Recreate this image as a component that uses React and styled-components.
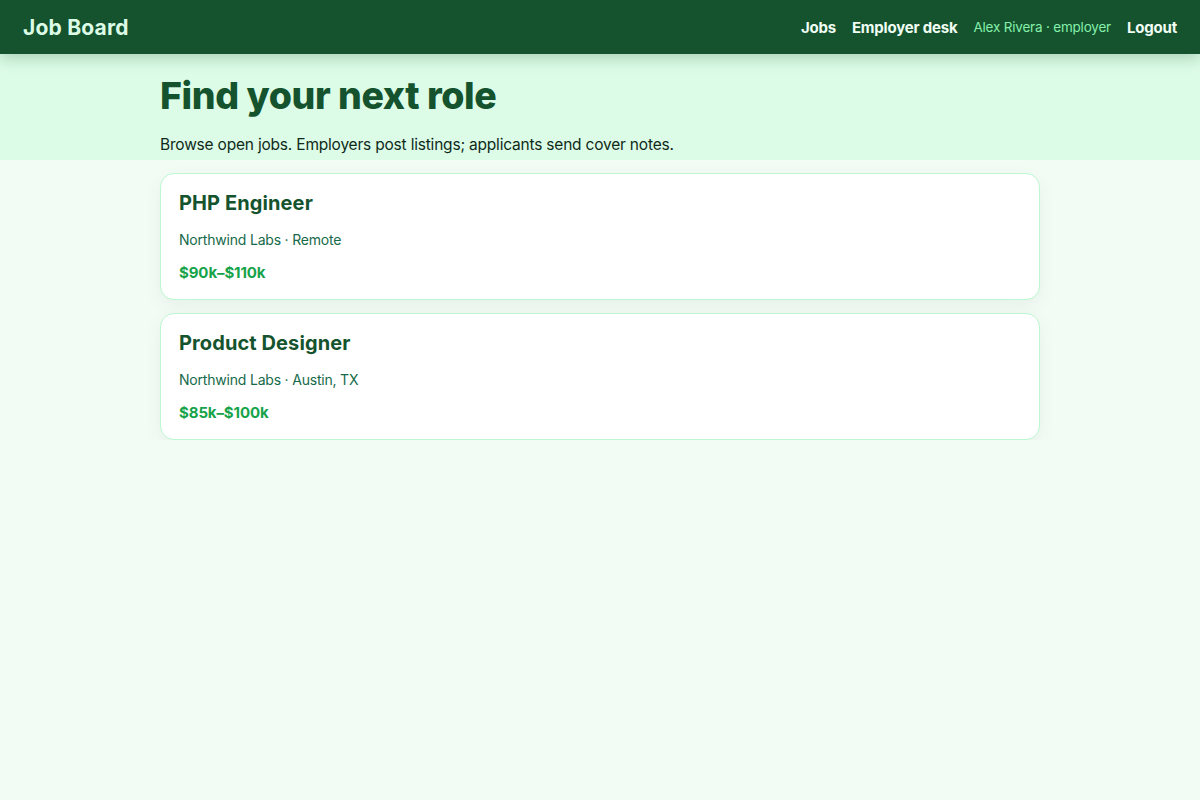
import React from 'react';
import styled, { createGlobalStyle } from 'styled-components';

const GlobalStyle = createGlobalStyle`
  * { box-sizing: border-box; }
  html, body {
    margin: 0;
    padding: 0;
    background: #f3fbf5;
    font-family: "Inter", "Noto Sans", sans-serif;
    color: #0f2a1a;
  }
`;

const Header = styled.header`
  height: 54px;
  background: #14532d;
  display: flex;
  align-items: center;
  justify-content: space-between;
  padding: 0 23px;
  box-shadow: 0 4px 14px rgba(20, 83, 45, 0.25);
  position: relative;
  z-index: 1;
`;

const Logo = styled.div`
  font-size: 21px;
  font-weight: 700;
  color: #dcfce7;
  letter-spacing: 0.2px;
`;

const Nav = styled.nav`
  display: flex;
  align-items: center;
  gap: 16px;
`;

const NavLink = styled.a`
  font-size: 15px;
  font-weight: 700;
  color: #f0fdf4;
  text-decoration: none;
  letter-spacing: -0.2px;
`;

const User = styled.span`
  font-size: 13.5px;
  color: #86efac;
  letter-spacing: -0.2px;
`;

const Hero = styled.section`
  background: #dcfce7;
  height: 106px;
`;

const Container = styled.div`
  width: 880px;
  margin: 0 auto;
`;

const Title = styled.h1`
  margin: 0;
  padding-top: 20px;
  font-size: 37.5px;
  line-height: 44px;
  font-weight: 800;
  color: #14532d;
  letter-spacing: -0.4px;
`;

const Lead = styled.p`
  margin: 17px 0 0;
  font-size: 15.5px;
  line-height: 20px;
  color: #0f2a1a;
  letter-spacing: -0.2px;
`;

const List = styled.div`
  display: flex;
  flex-direction: column;
  gap: 13px;
  padding-top: 13px;
`;

const Card = styled.article`
  background: #fff;
  border: 1px solid #bbf7d0;
  border-radius: 14px;
  height: 127px;
  padding: 16px 18px;
  box-shadow: 0 6px 18px rgba(20, 83, 45, 0.06);
`;

const JobTitle = styled.h2`
  margin: 0;
  font-size: 20px;
  line-height: 26px;
  font-weight: 700;
  color: #14532d;
  letter-spacing: 0.1px;
`;

const Meta = styled.div`
  margin-top: 15px;
  font-size: 14px;
  line-height: 18px;
  color: #166a4a;
  letter-spacing: -0.2px;
`;

const Salary = styled.div`
  margin-top: 14px;
  font-size: 15px;
  line-height: 20px;
  font-weight: 700;
  color: #16a34a;
  letter-spacing: -0.1px;
`;

const jobs = [
  { title: 'PHP Engineer', company: 'Northwind Labs', location: 'Remote', salary: '$90k–$110k' },
  { title: 'Product Designer', company: 'Northwind Labs', location: 'Austin, TX', salary: '$85k–$100k' },
];

const App = () => (
  <>
    <GlobalStyle />
    <Header>
      <Logo>Job Board</Logo>
      <Nav>
        <NavLink href="#">Jobs</NavLink>
        <NavLink href="#">Employer desk</NavLink>
        <User>Alex Rivera · employer</User>
        <NavLink href="#">Logout</NavLink>
      </Nav>
    </Header>
    <Hero>
      <Container>
        <Title>Find your next role</Title>
        <Lead>Browse open jobs. Employers post listings; applicants send cover notes.</Lead>
      </Container>
    </Hero>
    <Container>
      <List>
        {jobs.map((job) => (
          <Card key={job.title}>
            <JobTitle>{job.title}</JobTitle>
            <Meta>{job.company} · {job.location}</Meta>
            <Salary>{job.salary}</Salary>
          </Card>
        ))}
      </List>
    </Container>
  </>
);

export default App;
